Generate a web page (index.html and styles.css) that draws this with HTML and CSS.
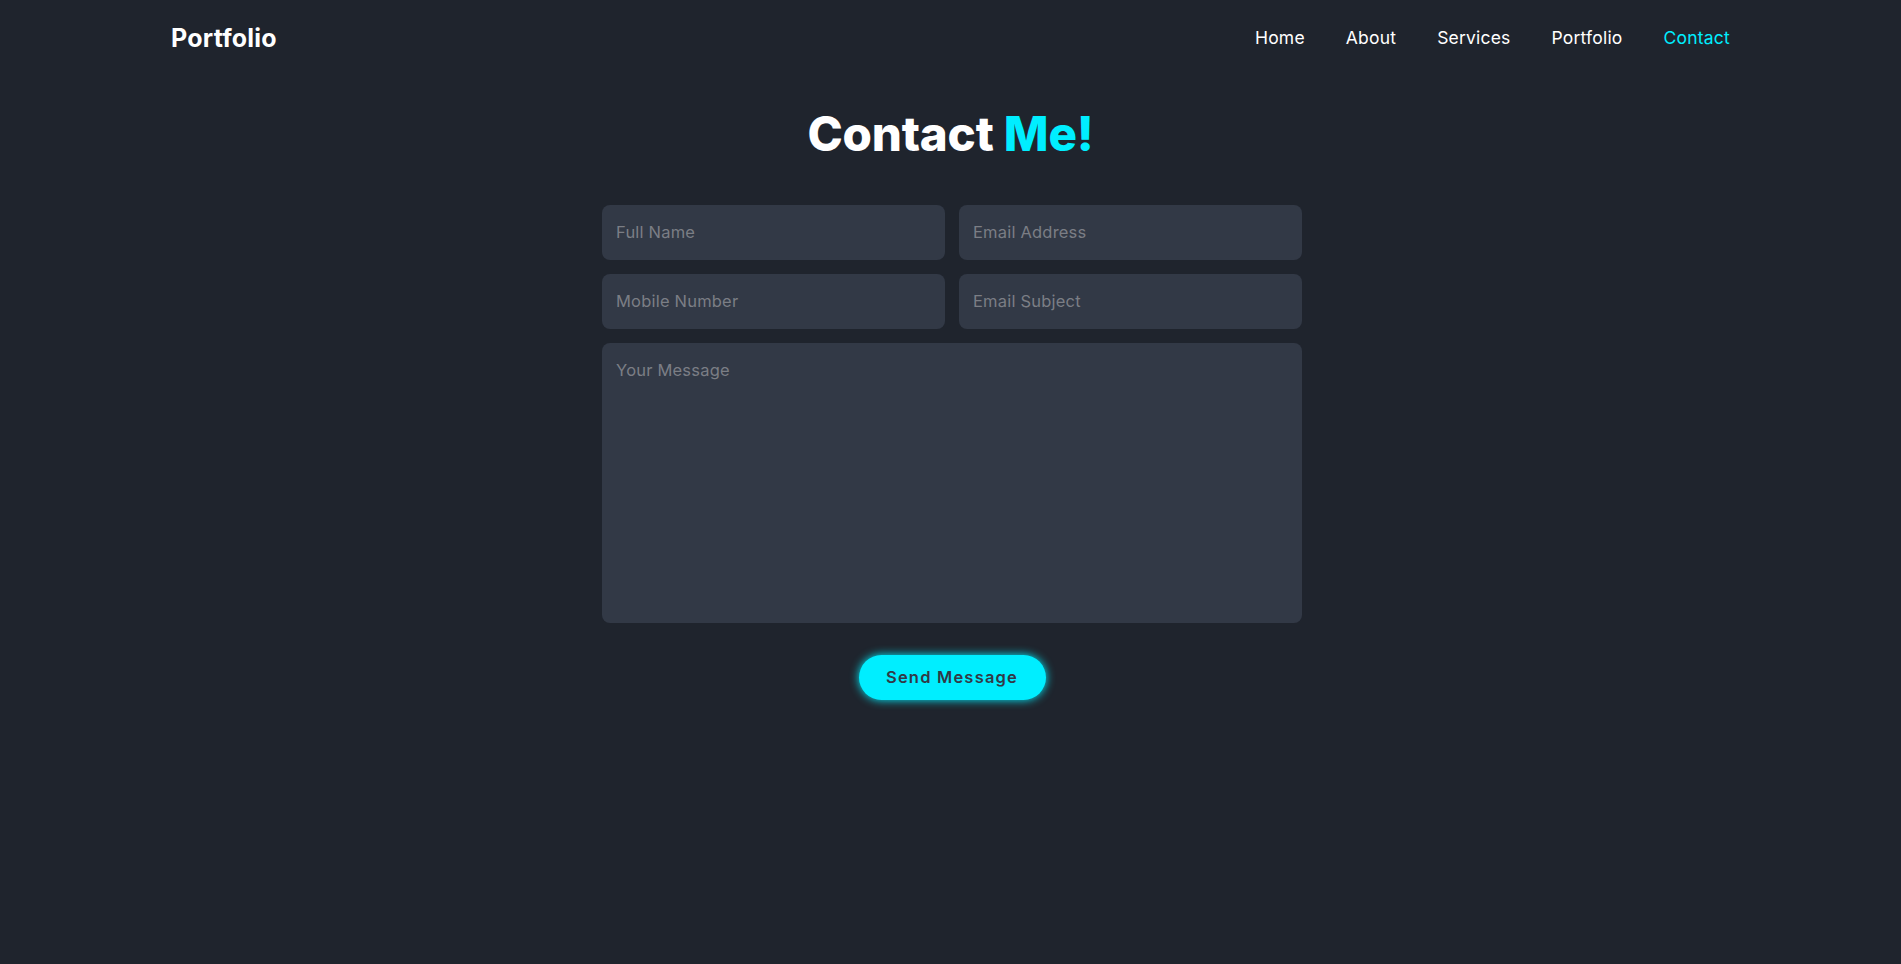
FILE: index.html
```html
<!DOCTYPE html>
<html lang="en">
<head>
<meta charset="utf-8">
<title>Contact</title>
<link rel="stylesheet" href="styles.css">
</head>
<body>
<header class="header">
  <a class="logo" href="#">Portfolio</a>
  <nav class="navbar">
    <a href="#">Home</a>
    <a href="#">About</a>
    <a href="#">Services</a>
    <a href="#">Portfolio</a>
    <a href="#" class="active">Contact</a>
  </nav>
</header>
<section class="contact">
  <h2 class="heading">Contact <span>Me!</span></h2>
  <form class="form" action="#">
    <div class="input-box">
      <input type="text" placeholder="Full Name">
      <input type="email" placeholder="Email Address">
    </div>
    <div class="input-box">
      <input type="number" placeholder="Mobile Number">
      <input type="text" placeholder="Email Subject">
    </div>
    <textarea placeholder="Your Message"></textarea>
    <button type="submit" class="btn">Send Message</button>
  </form>
</section>
</body>
</html>
```
FILE: styles.css
```css
* {
  margin: 0;
  padding: 0;
  box-sizing: border-box;
}
body {
  background: #1f242d;
  color: #fff;
  font-family: "Inter", "Noto Sans", sans-serif;
  height: 964px;
  overflow: hidden;
}
.header {
  height: 75px;
  padding: 0 9%;
  display: flex;
  align-items: center;
  justify-content: space-between;
}
.logo {
  font-size: 25px;
  font-weight: 700;
  color: #fff;
  text-decoration: none;
  letter-spacing: 0.2px;
}
.navbar {
  display: flex;
  gap: 41px;
}
.navbar a {
  font-size: 17.5px;
  color: #fff;
  text-decoration: none;
  font-weight: 400;
  letter-spacing: 0.2px;
}
.navbar a.active {
  color: #0ef;
}
.contact {
  display: flex;
  flex-direction: column;
  align-items: center;
  padding-top: 35px;
}
.heading {
  font-size: 47.5px;
  font-weight: 800;
  line-height: 1;
  margin-bottom: 47px;
  letter-spacing: -0.2px;
}
.heading span {
  color: #0ef;
}
.form {
  width: 700px;
  display: flex;
  flex-direction: column;
  align-items: center;
  margin-left: 3px;
}
.input-box {
  width: 100%;
  display: flex;
  justify-content: space-between;
  margin-bottom: 14px;
}
.input-box input,
.form textarea {
  font-family: inherit;
  font-size: 16.5px;
  color: #fff;
  background: #323946;
  border: none;
  border-radius: 8px;
  outline: none;
  padding: 0 14px;
  letter-spacing: 0.2px;
}
.input-box input {
  width: 343px;
  height: 55px;
}
.form textarea {
  width: 100%;
  height: 280px;
  padding: 17px 14px;
  resize: none;
}
.form ::placeholder {
  color: #7b7e85;
}
.btn {
  margin-top: 32px;
  width: 187px;
  height: 45px;
  border: none;
  border-radius: 40px;
  background: #0ef;
  box-shadow: 0 0 10px #0ef;
  color: #323946;
  font-family: inherit;
  font-size: 16.5px;
  font-weight: 600;
  letter-spacing: 1.2px;
  cursor: pointer;
}
```
